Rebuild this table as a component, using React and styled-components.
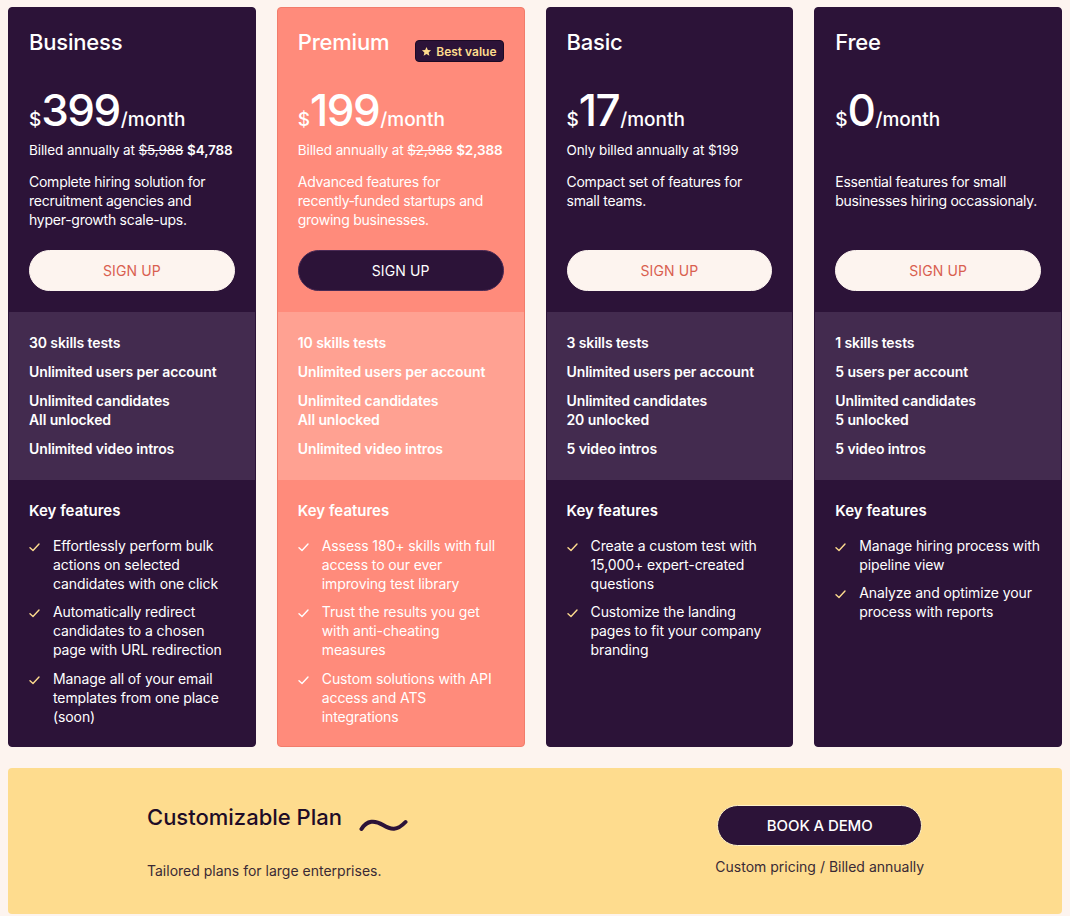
import React from "react";
import styled, { createGlobalStyle, css } from "styled-components";

const GlobalStyle = createGlobalStyle`
  * { box-sizing: border-box; }
  html, body { margin: 0; padding: 0; background: #FDF4EF; }
  body { font-family: Inter, "Noto Sans", Arial, sans-serif; color: #2C1338; }
`;

const DARK = "#2C1338";
const DARK_Q = "#432B4F";
const SALMON = "#FF8B7B";
const SALMON_Q = "#FFA192";
const CREAM = "#FDF4EF";
const YELLOW = "#FEDC8E";

const Page = styled.div`
  padding: 7px 8px 2px;
`;

const Grid = styled.div`
  display: grid;
  grid-template-columns: repeat(4, 1fr);
  gap: 21px;
`;

const Card = styled.div`
  display: flex;
  flex-direction: column;
  border-radius: 4px;
  overflow: hidden;
  color: #fff;
  background: ${(p) => (p.$featured ? SALMON : DARK)};
  border: 1px solid ${(p) => (p.$featured ? "#F27C6B" : DARK)};
`;

const Top = styled.div`
  padding: 20px 20px 21px;
`;

const TitleRow = styled.div`
  display: flex;
  justify-content: space-between;
  align-items: flex-start;
  height: 28px;
`;

const PlanName = styled.h2`
  margin: 0;
  font-size: 22px;
  line-height: 28px;
  font-weight: 500;
  letter-spacing: -0.2px;
`;

const Badge = styled.span`
  display: inline-flex;
  align-items: center;
  gap: 4px;
  margin-top: 12px;
  height: 22px;
  padding: 0 6px 0 5px;
  border-radius: 4px;
  background: ${DARK};
  color: ${YELLOW};
  font-size: 12px;
  font-weight: 600;
  border: 1px solid #1c0a25;
`;

const PriceRow = styled.div`
  display: flex;
  align-items: baseline;
  margin-top: 32px;
  height: 46px;
  line-height: 1;
`;

const Currency = styled.span`
  font-size: 19px;
  font-weight: 500;
`;

const Amount = styled.span`
  font-size: 44px;
  font-weight: 500;
  letter-spacing: -1.5px;
`;

const Per = styled.span`
  font-size: 19px;
  font-weight: 500;
  margin-left: 1px;
`;

const Billed = styled.div`
  margin-top: 6px;
  height: 20px;
  font-size: 13.5px;
  line-height: 20px;
  letter-spacing: -0.1px;
  s { font-weight: 400; }
  b { font-weight: 600; }
`;

const Desc = styled.p`
  margin: 12px 0 0;
  min-height: 57px;
  font-size: 14px;
  line-height: 19px;
  letter-spacing: -0.25px;
`;

const SignUp = styled.button`
  display: flex;
  align-items: center;
  justify-content: center;
  width: 100%;
  height: 41px;
  margin-top: 21px;
  border-radius: 999px;
  font-family: Inter, Arial, sans-serif;
  font-size: 14px;
  font-weight: 400;
  letter-spacing: 0.1px;
  cursor: pointer;
  ${(p) =>
    p.$featured
      ? css`
          background: ${DARK};
          color: #fff;
          border: 1px solid #4a2a55;
        `
      : css`
          background: ${CREAM};
          color: #D9604F;
          border: 1px solid ${CREAM};
        `}
`;

const Quotas = styled.ul`
  list-style: none;
  margin: 0;
  padding: 21px 20px 22px;
  display: flex;
  flex-direction: column;
  gap: 10px;
  background: ${(p) => (p.$featured ? SALMON_Q : DARK_Q)};
`;

const Quota = styled.li`
  font-size: 14px;
  line-height: 19px;
  font-weight: 600;
  letter-spacing: -0.1px;
`;

const Features = styled.div`
  padding: 21px 20px 20px;
`;

const FeaturesTitle = styled.h3`
  margin: 0;
  font-size: 15px;
  line-height: 20px;
  font-weight: 600;
`;

const FeatureList = styled.ul`
  list-style: none;
  margin: 15px 0 0;
  padding: 0;
  display: flex;
  flex-direction: column;
  gap: 9.3px;
`;

const Feature = styled.li`
  display: flex;
  gap: 12px;
  font-size: 14px;
  line-height: 19px;
  letter-spacing: -0.1px;
`;

const CheckWrap = styled.span`
  flex: none;
  width: 12px;
  margin-top: 1px;
  color: ${(p) => (p.$featured ? "#fff" : YELLOW)};
`;

const Custom = styled.section`
  margin-top: 21px;
  height: 146px;
  background: ${YELLOW};
  border-radius: 4px;
  display: grid;
  grid-template-columns: 1fr 1fr;
  padding: 0 18px 0 139px;
`;

const CustomLeft = styled.div`
  padding-top: 35px;
`;

const CustomTitleRow = styled.div`
  display: flex;
  align-items: flex-start;
  gap: 17px;
`;

const CustomTitle = styled.h2`
  margin: 0;
  font-size: 22px;
  line-height: 28px;
  font-weight: 500;
  color: #1E0C27;
`;

const Tilde = styled.svg`
  margin-top: 11px;
`;

const CustomSub = styled.p`
  margin: 27px 0 0;
  font-size: 14px;
  line-height: 20px;
  color: #3a2a35;
`;

const CustomRight = styled.div`
  padding-top: 37px;
  display: flex;
  flex-direction: column;
  align-items: center;
`;

const DemoButton = styled.button`
  width: 205px;
  height: 41px;
  border-radius: 999px;
  background: ${DARK};
  color: #fff;
  border: 1px solid #fff3c8;
  font-family: Inter, Arial, sans-serif;
  font-size: 15px;
  font-weight: 500;
  letter-spacing: -0.1px;
  cursor: pointer;
`;

const Caption = styled.p`
  margin: 11px 0 0;
  font-size: 14px;
  line-height: 20px;
  color: #3a2a35;
`;

const Check = () => (
  <svg width="11" height="9" viewBox="0 0 11 9" fill="none">
    <path d="M1 4.8 L4 7.5 L10 1" stroke="currentColor" strokeWidth="1.4" strokeLinecap="round" strokeLinejoin="round" />
  </svg>
);

const Star = () => (
  <svg width="11" height="11" viewBox="0 0 24 24" fill={YELLOW}>
    <path d="M12 2l2.9 6.9 7.1.6-5.4 4.7 1.7 7.1L12 17.6 5.7 21.3l1.7-7.1L2 9.5l7.1-.6z" />
  </svg>
);

const plans = [
  {
    name: "Business",
    amount: "399",
    billed: (
      <>
        Billed annually at <s>$5,988</s> <b>$4,788</b>
      </>
    ),
    desc: "Complete hiring solution for recruitment agencies and hyper-growth scale-ups.",
    quotas: ["30 skills tests", "Unlimited users per account", ["Unlimited candidates", "All unlocked"], "Unlimited video intros"],
    features: [
      "Effortlessly perform bulk actions on selected candidates with one click",
      "Automatically redirect candidates to a chosen page with URL redirection",
      "Manage all of your email templates from one place (soon)",
    ],
  },
  {
    name: "Premium",
    featured: true,
    amount: "199",
    billed: (
      <>
        Billed annually at <s>$2,988</s> <b>$2,388</b>
      </>
    ),
    desc: "Advanced features for recently\u2011funded startups and growing businesses.",
    quotas: ["10 skills tests", "Unlimited users per account", ["Unlimited candidates", "All unlocked"], "Unlimited video intros"],
    features: [
      "Assess 180+ skills with full access to our ever improving test library",
      "Trust the results you get with anti-cheating measures",
      "Custom solutions with API access and ATS integrations",
    ],
  },
  {
    name: "Basic",
    amount: "17",
    billed: "Only billed annually at $199",
    desc: "Compact set of features for small teams.",
    quotas: ["3 skills tests", "Unlimited users per account", ["Unlimited candidates", "20 unlocked"], "5 video intros"],
    features: [
      "Create a custom test with 15,000+ expert-created questions",
      "Customize the landing pages to fit your company branding",
    ],
  },
  {
    name: "Free",
    amount: "0",
    billed: "",
    desc: "Essential features for small businesses hiring occassionaly.",
    quotas: ["1 skills tests", "5 users per account", ["Unlimited candidates", "5 unlocked"], "5 video intros"],
    features: ["Manage hiring process with pipeline view", "Analyze and optimize your process with reports"],
  },
];

export default function App() {
  return (
    <>
      <GlobalStyle />
      <Page>
        <Grid>
          {plans.map((p) => (
            <Card key={p.name} $featured={p.featured}>
              <Top>
                <TitleRow>
                  <PlanName>{p.name}</PlanName>
                  {p.featured && (
                    <Badge>
                      <Star />
                      Best value
                    </Badge>
                  )}
                </TitleRow>
                <PriceRow>
                  <Currency>$</Currency>
                  <Amount>{p.amount}</Amount>
                  <Per>/month</Per>
                </PriceRow>
                <Billed>{p.billed}</Billed>
                <Desc>{p.desc}</Desc>
                <SignUp $featured={p.featured}>SIGN UP</SignUp>
              </Top>
              <Quotas $featured={p.featured}>
                {p.quotas.map((q, i) => (
                  <Quota key={i}>
                    {Array.isArray(q) ? (
                      <>
                        {q[0]}
                        <br />
                        {q[1]}
                      </>
                    ) : (
                      q
                    )}
                  </Quota>
                ))}
              </Quotas>
              <Features>
                <FeaturesTitle>Key features</FeaturesTitle>
                <FeatureList>
                  {p.features.map((f) => (
                    <Feature key={f}>
                      <CheckWrap $featured={p.featured}>
                        <Check />
                      </CheckWrap>
                      <span>{f}</span>
                    </Feature>
                  ))}
                </FeatureList>
              </Features>
            </Card>
          ))}
        </Grid>
        <Custom>
          <CustomLeft>
            <CustomTitleRow>
              <CustomTitle>Customizable Plan</CustomTitle>
              <Tilde width="49" height="20" viewBox="0 0 49 20" fill="none">
                <path d="M2.5 15 C 8 6, 16 6, 24 11 S 38 17, 46.5 8" stroke={DARK} strokeWidth="4" strokeLinecap="round" />
              </Tilde>
            </CustomTitleRow>
            <CustomSub>Tailored plans for large enterprises.</CustomSub>
          </CustomLeft>
          <CustomRight>
            <DemoButton>BOOK A DEMO</DemoButton>
            <Caption>Custom pricing / Billed annually</Caption>
          </CustomRight>
        </Custom>
      </Page>
    </>
  );
}
